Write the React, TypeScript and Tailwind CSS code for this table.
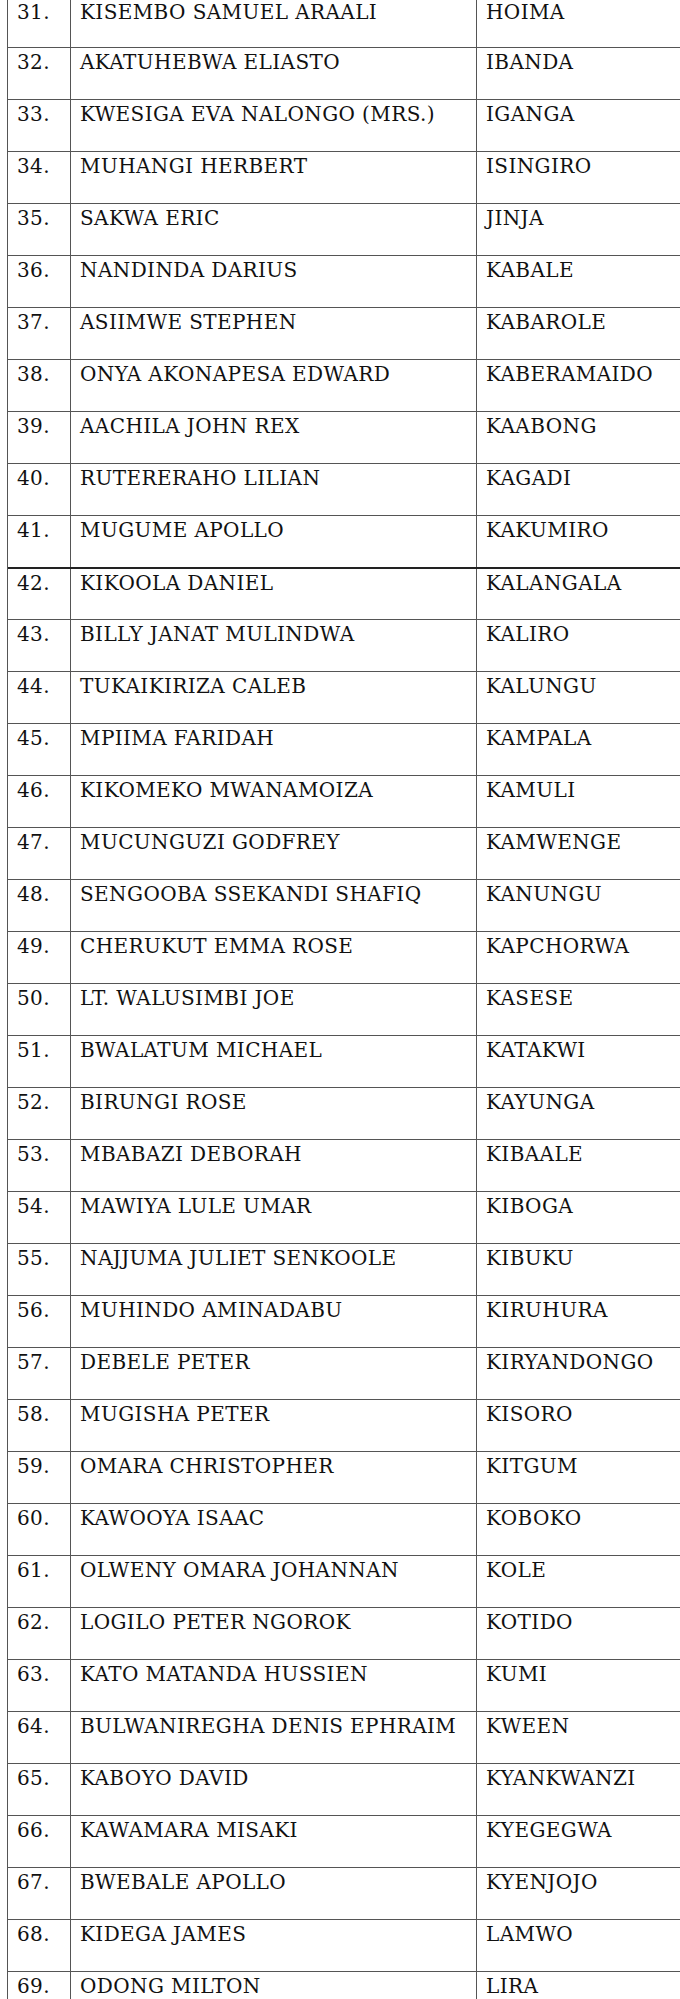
const rows: [string, string][] = [
  ["KISEMBO SAMUEL ARAALI", "HOIMA"],
  ["AKATUHEBWA ELIASTO", "IBANDA"],
  ["KWESIGA EVA NALONGO (MRS.)", "IGANGA"],
  ["MUHANGI HERBERT", "ISINGIRO"],
  ["SAKWA ERIC", "JINJA"],
  ["NANDINDA DARIUS", "KABALE"],
  ["ASIIMWE STEPHEN", "KABAROLE"],
  ["ONYA AKONAPESA EDWARD", "KABERAMAIDO"],
  ["AACHILA JOHN REX", "KAABONG"],
  ["RUTERERAHO LILIAN", "KAGADI"],
  ["MUGUME APOLLO", "KAKUMIRO"],
  ["KIKOOLA DANIEL", "KALANGALA"],
  ["BILLY JANAT MULINDWA", "KALIRO"],
  ["TUKAIKIRIZA CALEB", "KALUNGU"],
  ["MPIIMA FARIDAH", "KAMPALA"],
  ["KIKOMEKO MWANAMOIZA", "KAMULI"],
  ["MUCUNGUZI GODFREY", "KAMWENGE"],
  ["SENGOOBA SSEKANDI SHAFIQ", "KANUNGU"],
  ["CHERUKUT EMMA ROSE", "KAPCHORWA"],
  ["LT. WALUSIMBI JOE", "KASESE"],
  ["BWALATUM MICHAEL", "KATAKWI"],
  ["BIRUNGI ROSE", "KAYUNGA"],
  ["MBABAZI DEBORAH", "KIBAALE"],
  ["MAWIYA LULE UMAR", "KIBOGA"],
  ["NAJJUMA JULIET SENKOOLE", "KIBUKU"],
  ["MUHINDO AMINADABU", "KIRUHURA"],
  ["DEBELE PETER", "KIRYANDONGO"],
  ["MUGISHA PETER", "KISORO"],
  ["OMARA CHRISTOPHER", "KITGUM"],
  ["KAWOOYA ISAAC", "KOBOKO"],
  ["OLWENY OMARA JOHANNAN", "KOLE"],
  ["LOGILO PETER NGOROK", "KOTIDO"],
  ["KATO MATANDA HUSSIEN", "KUMI"],
  ["BULWANIREGHA DENIS EPHRAIM", "KWEEN"],
  ["KABOYO DAVID", "KYANKWANZI"],
  ["KAWAMARA MISAKI", "KYEGEGWA"],
  ["BWEBALE APOLLO", "KYENJOJO"],
  ["KIDEGA JAMES", "LAMWO"],
  ["ODONG MILTON", "LIRA"],
];

export default function App() {
  return (
    <div className="w-[680px] h-[1999px] overflow-hidden bg-white text-[#111] font-['DejaVu_Serif',serif]">
      <div className="ml-[7px] mt-[-3px] w-[720px] border-l border-[#555]">
        {rows.map(([name, district], i) => {
          const num = 31 + i;
          return (
            <div
              key={num}
              className={`grid grid-cols-[63px_406px_1fr] border-t text-[20px] leading-[24px] tracking-[0.4px] ${num === 31 ? "h-[50px]" : "h-[52px]"} ${num === 42 ? "border-t-2 border-[#222]" : "border-[#555]"}`}
            >
              <div className="border-r border-[#555] pl-[9px] pt-[2px]">{num}.</div>
              <div className="border-r border-[#555] pl-[9px] pt-[2px]">{name}</div>
              <div className="pl-[9px] pt-[2px]">{district}</div>
            </div>
          );
        })}
      </div>
    </div>
  );
}
